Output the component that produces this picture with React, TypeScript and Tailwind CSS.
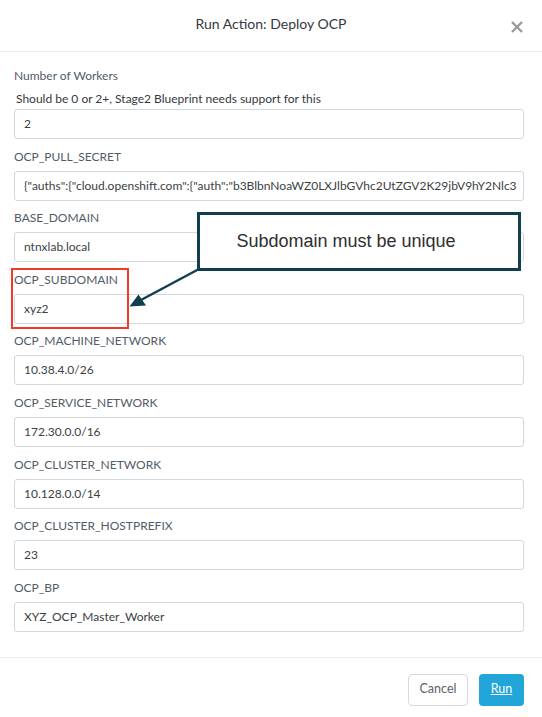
const fields = [
  { label: "OCP_PULL_SECRET", value: '{"auths":{"cloud.openshift.com":{"auth":"b3BlbnNoaWZ0LXJlbGVhc2UtZGV2K29jbV9hY2Nlc3' },
  { label: "BASE_DOMAIN", value: "ntnxlab.local" },
  { label: "OCP_SUBDOMAIN", value: "xyz2" },
  { label: "OCP_MACHINE_NETWORK", value: "10.38.4.0/26" },
  { label: "OCP_SERVICE_NETWORK", value: "172.30.0.0/16" },
  { label: "OCP_CLUSTER_NETWORK", value: "10.128.0.0/14" },
  { label: "OCP_CLUSTER_HOSTPREFIX", value: "23" },
  { label: "OCP_BP", value: "XYZ_OCP_Master_Worker" },
];

const Input = ({ value }: { value: string }) => (
  <div className="h-[30px] border border-[#d3d8dd] rounded-[3px] bg-white flex items-center px-[9px] overflow-hidden whitespace-nowrap text-[12px] text-[#3a3f45]">
    {value}
  </div>
);

const App = () => {
  return (
    <div className="relative w-[542px] h-[717px] bg-white overflow-hidden font-['Lato',sans-serif]">
      {/* header */}
      <div className="h-[52px] border-b border-[#ebeef0] flex items-center justify-center relative">
        <h2 className="text-[14px] text-[#33383d] -mt-[4px]">Run Action: Deploy OCP</h2>
        <svg className="absolute left-[511px] top-[21px]" width="12" height="12" viewBox="0 0 12 12">
          <path d="M1 1L11 11M11 1L1 11" stroke="#9a9a9a" strokeWidth="2.4" />
        </svg>
      </div>

      {/* body */}
      <div className="px-[14px] pr-[18px] pt-[16px] pb-[25px] flex flex-col gap-[9.6px]">
        <div className="flex flex-col">
          <label className="text-[12px] leading-[16px] text-[#525c67]">Number of Workers</label>
          <p className="text-[12px] leading-[16px] text-[#33383d] ml-[2px] mt-[7px]">Should be 0 or 2+, Stage2 Blueprint needs support for this</p>
          <div className="mt-[2px]"><Input value="2" /></div>
        </div>
        {fields.map((f) => (
          <div key={f.label} className="flex flex-col">
            <label className="text-[12px] leading-[16px] text-[#525c67]">{f.label}</label>
            <div className="mt-[6px]"><Input value={f.value} /></div>
          </div>
        ))}
      </div>

      {/* footer */}
      <div className="border-t border-[#ebeef0] flex justify-end gap-[11px] pr-[18px] pt-[16px]">
        <button className="w-[60px] h-[32px] border border-[#d5dade] rounded-[4px] bg-white text-[12.5px] text-[#5b6168]">Cancel</button>
        <button className="w-[45px] h-[32px] rounded-[4px] bg-[#22a5d8] text-[12.5px] text-white underline">Run</button>
      </div>

      {/* annotation overlay */}
      <div className="absolute left-[11px] top-[268px] w-[118px] h-[61px] border-[2.5px] border-[#f23a2a]" />
      <div className="absolute left-[197px] top-[212px] w-[324px] h-[59px] border-[3px] border-[#113f50] bg-white flex items-center justify-center pr-[26px]">
        <span className="font-['Liberation_Sans',Arial,sans-serif] text-[18px] text-[#2e2e2e]">Subdomain must be unique</span>
      </div>
      <svg className="absolute left-0 top-0 pointer-events-none" width="542" height="717">
        <line x1="199" y1="269" x2="141" y2="300" stroke="#113f50" strokeWidth="2.5" />
        <polygon points="129.5,306.5 138.5,294.5 146,305.5" fill="#113f50" />
      </svg>
    </div>
  );
};

export default App;
